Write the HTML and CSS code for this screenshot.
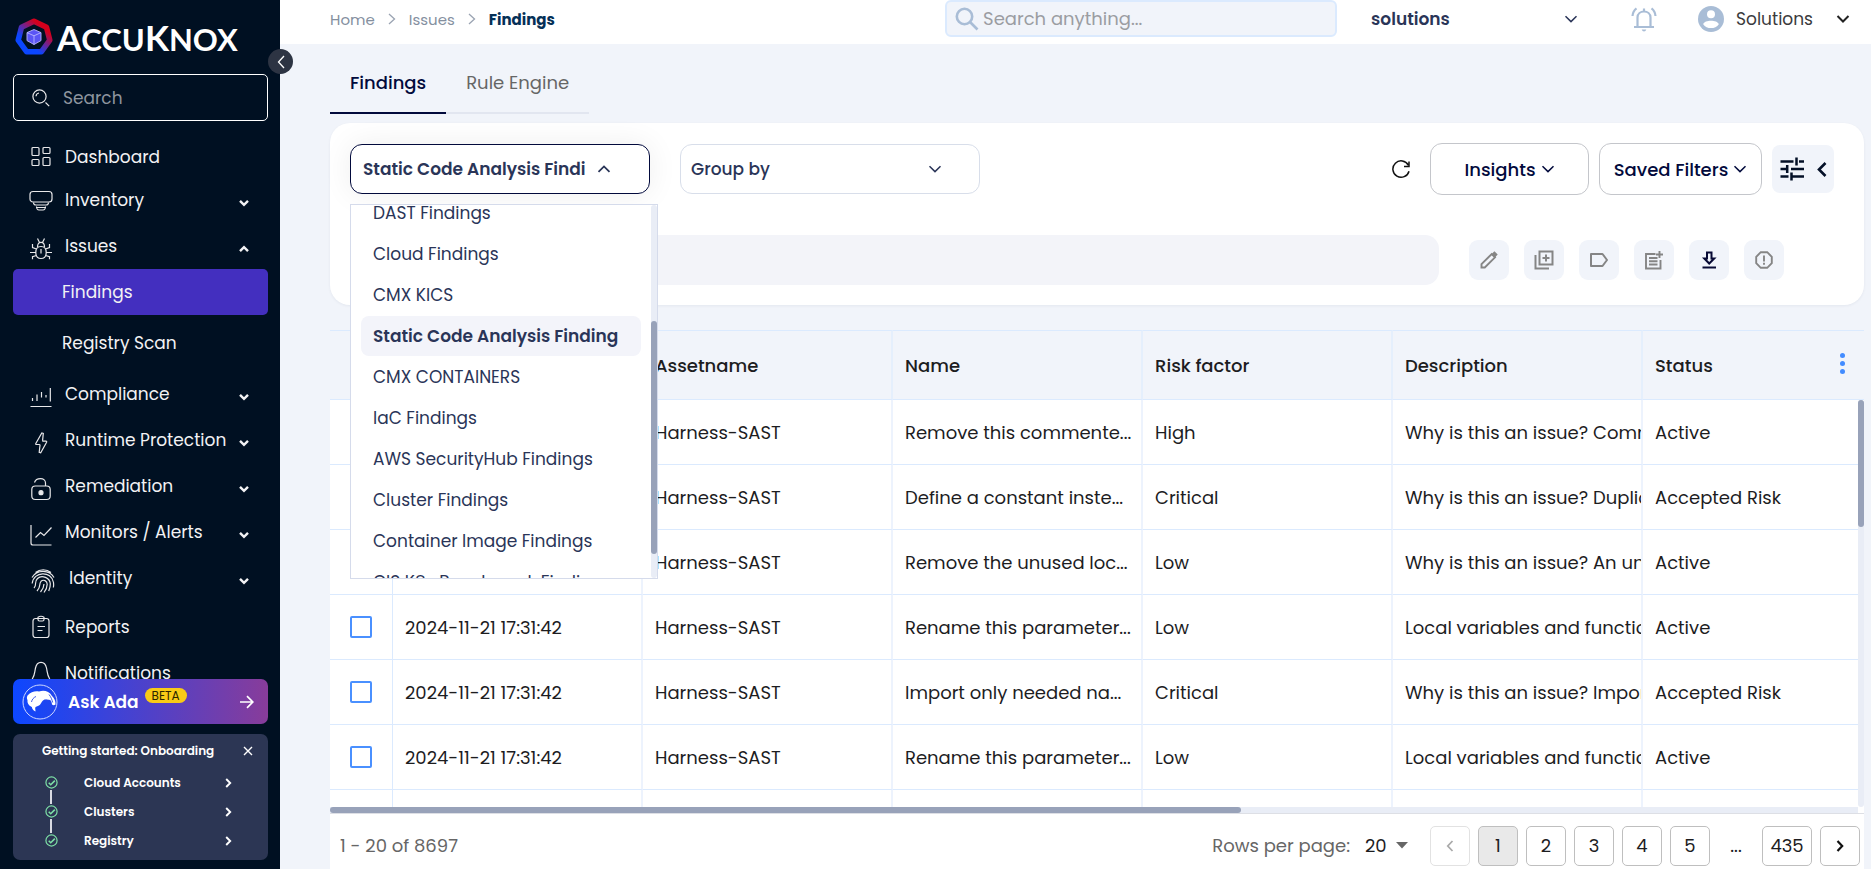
FILE: index.html
```html
<!DOCTYPE html>
<html lang="en">
<head>
<meta charset="utf-8">
<title>AccuKnox - Findings</title>
<link rel="stylesheet" href="styles.css">
</head>
<body>
<svg class="defs" aria-hidden="true">
  <symbol id="down" viewBox="0 0 14 8"><path d="M1.500 1.200 7 6.600l5.500-5.400" fill="none" stroke="currentColor" stroke-width="1.500"/></symbol>
  <symbol id="up" viewBox="0 0 14 8"><path d="M1.500 6.800 7 1.400l5.500 5.400" fill="none" stroke="currentColor" stroke-width="1.800"/></symbol>
  <symbol id="bold-down" viewBox="0 0 10 8"><path d="M1 1.800l4 4 4-4" fill="none" stroke="currentColor" stroke-width="2.400"/></symbol>
  <symbol id="bold-up" viewBox="0 0 10 8"><path d="M1 6.200l4-4 4 4" fill="none" stroke="currentColor" stroke-width="2.400"/></symbol>
  <symbol id="right" viewBox="0 0 8 12"><path d="M1 1l5.500 5L1 11" fill="none" stroke="currentColor" stroke-width="1.300"/></symbol>
  <symbol id="bold-right" viewBox="0 0 7 10"><path d="M1.200 1l4 4-4 4" fill="none" stroke="currentColor" stroke-width="1.900"/></symbol>
  <symbol id="left" viewBox="0 0 8 14"><path d="M7 1 1.500 7 7 13" fill="none" stroke="currentColor" stroke-width="1.300"/></symbol>
  <symbol id="check" viewBox="0 0 14 14"><circle cx="7" cy="7" r="6" fill="none" stroke="currentColor" stroke-width="1.300"/><path d="M4 7.200l2.200 2.200L10.600 5" fill="none" stroke="currentColor" stroke-width="1.700"/></symbol>
</svg>

<div class="app">
  <aside class="sidebar">
    <a class="logo" href="#" aria-label="AccuKnox">
      <svg class="logo-mark" viewBox="0 0 38 38">
        <defs><linearGradient id="ring" x1="0.850" y1="0.150" x2="0.250" y2="0.850"><stop offset="0.100" stop-color="#d4001c"/><stop offset="0.550" stop-color="#5b2aa8"/><stop offset="0.850" stop-color="#0b46ff"/></linearGradient></defs>
        <path d="M19 3.200 31.500 9.200 34.800 22.200 26.300 33.800H11.700L3.200 22.200 6.500 9.200Z" fill="none" stroke="url(#ring)" stroke-width="5.500" stroke-linejoin="round"/>
        <path d="M19 11.500 26 14.600v8L19 26.500l-7-3.900v-8Z" fill="#5a55f5" stroke="#b9b7ff" stroke-width="0.900"/>
        <path d="M12 14.600l7 3.200 7-3.200M19 17.800v8.700" fill="none" stroke="#b9b7ff" stroke-width="0.900"/>
      </svg>
      <span class="wordmark"><b>A</b>CCU<b>K</b>NOX</span>
    </a>
    <button class="collapse" aria-label="Collapse menu"><svg width="8" height="14"><use href="#left"/></svg></button>

    <label class="side-search">
      <svg width="18" height="18" viewBox="0 0 18 18" fill="none" stroke="#e8e8ea" stroke-width="1.200"><circle cx="7.500" cy="7.500" r="6.600"/><path d="M4 7.200A3.600 3.600 0 0 1 7 4M13.500 13.500l3.700 3.700"/></svg>
      <input type="text" placeholder="Search" aria-label="Search menu">
    </label>

    <nav class="nav">
      <a class="nav-item first" href="#"><svg class="ico" viewBox="0 0 24 24"><rect x="3" y="2.500" width="7" height="8" rx="1"/><rect x="14" y="2.500" width="7" height="6" rx="1"/><rect x="3" y="14.500" width="7" height="6" rx="1"/><rect x="14" y="12.500" width="7" height="8" rx="1"/></svg><span>Dashboard</span></a>
      <a class="nav-item" href="#"><svg class="ico" viewBox="0 0 24 24"><rect x="1" y="3.500" width="22" height="10.500" rx="3"/><path d="M4.500 14.500c0 2 1 2.500 2.500 2.500h10c1.500 0 2.500-.5 2.500-2.500M7.500 18.500c0 1.500 1 3.500 2.500 3.500h4c1.500 0 2.500-2 2.500-3.500M7 19.500h10"/></svg><span>Inventory</span><svg class="arrow"><use href="#bold-down"/></svg></a>
      <a class="nav-item sub" href="#"><svg class="ico" viewBox="0 0 24 24"><path d="M12 21.500c-3.300 0-5.200-2.200-5.200-6 0-3.600 1.800-6 5.200-6s5.200 2.400 5.200 6c0 3.800-1.900 6-5.200 6ZM12 12v4.500M8.500 10c0-3 1.200-4.700 3.500-4.700s3.500 1.700 3.500 4.700M8.500 1.500l2 4M15.500 1.500l-2 4M6.800 15.500H1M17.200 15.500H23M7.500 12l-4-1.500V7M16.500 12l4-1.500V7M7.500 18.500l-4 1.200v2.500M16.500 18.500l4 1.200v2.500"/></svg><span>Issues</span><svg class="arrow"><use href="#bold-up"/></svg></a>
      <a class="nav-child active" href="#">Findings</a>
      <a class="nav-child spaced" href="#">Registry Scan</a>
      <a class="nav-item sub" href="#"><svg class="ico" viewBox="0 0 24 24"><path d="M1.500 21.500h21M3.500 13v3M8 9.500v6.500M12.500 7v5.500M17 10v2.500M21.300 3v13.500"/></svg><span>Compliance</span><svg class="arrow"><use href="#bold-down"/></svg></a>
      <a class="nav-item sub" href="#"><svg class="ico" viewBox="0 0 24 24"><path d="M12.800 2 6.800 12.500c-.3.600 0 1 .6 1h2.800c.6 0 .8.300.8.800l-.8 7 1.500.4 5.900-10.500c.3-.6 0-1-.6-1h-2.700c-.5 0-.8-.3-.7-.8l.7-7Z"/></svg><span>Runtime Protection</span><svg class="arrow"><use href="#bold-down"/></svg></a>
      <a class="nav-item sub" href="#"><svg class="ico" viewBox="0 0 24 24"><rect x="2.800" y="9" width="18.400" height="13.500" rx="3.500"/><path d="M16.500 9V6c0-6-9.500-5.500-11-.5"/><circle cx="12" cy="15.700" r="2" fill="#e8e8ea"/></svg><span>Remediation</span><svg class="arrow"><use href="#bold-down"/></svg></a>
      <a class="nav-item sub" href="#"><svg class="ico" viewBox="0 0 24 24"><path d="M2 2v18q0 2 2 2h18.500M6.500 14.500l5-5 3.500 3 7.500-8"/></svg><span>Monitors / Alerts</span><svg class="arrow"><use href="#bold-down"/></svg></a>
      <a class="nav-item sub wide" href="#"><svg class="ico" viewBox="0 0 24 24"><path d="M4.500 3.500C9-.2 15.500-.2 20 3.500M1 8.500c5-8.300 17.500-8 22 0M1.200 14.500C2.500 2 20.500 1.500 22.500 13.500c.3 2 .2 3.500-.1 5M3 19C6.500 15 2.500 13.500 6.500 9.500c4.500-4.300 12.500-.5 12.800 5.200.1 2.800-.6 5-1.600 7.300M6 22c4.500-4.500 1.500-7 4-9.700 2.500-2.300 6.200-.4 6.200 3 0 3.300-1.500 6-3.200 8.200M9.500 23c2.300-2.700 3.500-5 3.500-8"/></svg><span>Identity</span><svg class="arrow"><use href="#bold-down"/></svg></a>
      <a class="nav-item gap" href="#"><svg class="ico" viewBox="0 0 24 24"><rect x="4" y="3.500" width="16" height="19" rx="2.500"/><path d="M9 2.300c2-1.400 4-1.400 6 0v2.200q0 1.500-1.500 1.500h-3Q9 6 9 4.500ZM8.500 11.500h7.500M8.500 15.500h5"/></svg><span>Reports</span></a>
      <a class="nav-item" href="#"><svg class="ico" viewBox="0 0 24 24"><path d="M3.500 17.500c2.500-4 2-6 3-10.500 1.500-7.500 9.500-7.500 11 0 1 4.500.5 6.500 3 10.500q.5 1-1 1h-15q-1.500 0-1-1Z"/></svg><span>Notifications</span></a>
    </nav>

    <button class="ada">
      <svg width="36" height="36" viewBox="0 0 36 36"><circle cx="18" cy="18" r="17" fill="none" stroke="#cfd8ff"/><path d="M5.500 11.500C9 7.500 13 7 17 7.500c5-1.500 10-.5 13 4.500 2.300 2 3.700 5 3.500 8.500-1.200 1-2.600.8-3.500 0-.2-2-.8-3.700-2-4.800-2.500.8-3.500-.7-5.500-.2-2.500.8-3 3.500-4.500 5.200-1.200 1.300-3 1.300-4.500 2.300-.8 1.500.2 3 0 4.500-2-.8-3.300-2.500-3.700-4.500C6.500 21.500 5 18.500 5.500 16c-.8-1.500-.8-3 0-4.500Z" fill="#fff"/><path d="M9.500 18c.5-2.500 2-4.500 4.500-5.500M27 10.500c2 2.500 3 5 3.700 8M23 16.500c1.500-.6 3-.6 4.500 0" stroke="#2b49e6" fill="none" stroke-width="0.900"/></svg>
      <span class="ada-label">Ask Ada</span><span class="beta">BETA</span>
      <svg class="ada-arrow" width="14" height="14" viewBox="0 0 14 14"><path d="M0 7h12.500M7 1.200 12.800 7 7 12.800" fill="none" stroke="#fff" stroke-width="1.700"/></svg>
    </button>

    <section class="onboard">
      <header><h2>Getting started: Onboarding</h2><button aria-label="Close"><svg width="10" height="10" viewBox="0 0 10 10"><path d="M1 1l8 8M9 1 1 9" stroke="#fff" stroke-width="1.400"/></svg></button></header>
      <ol>
        <li><svg class="tick"><use href="#check"/></svg><a href="#">Cloud Accounts</a><svg class="go"><use href="#bold-right"/></svg></li>
        <li><svg class="tick"><use href="#check"/></svg><a href="#">Clusters</a><svg class="go"><use href="#bold-right"/></svg></li>
        <li><svg class="tick"><use href="#check"/></svg><a href="#">Registry</a><svg class="go"><use href="#bold-right"/></svg></li>
      </ol>
    </section>
  </aside>

  <div class="page">
    <header class="topbar">
      <nav class="crumbs" aria-label="Breadcrumb">
        <a href="#">Home</a><svg><use href="#right"/></svg><a href="#">Issues</a><svg><use href="#right"/></svg><strong>Findings</strong>
      </nav>
      <label class="search">
        <svg width="24" height="24" viewBox="0 0 24 24" fill="none" stroke="#a9bdd6" stroke-width="2.600"><circle cx="9.500" cy="9.500" r="7.700"/><path d="M15 15l7.500 7.500"/></svg>
        <input type="text" placeholder="Search anything..." aria-label="Search anything">
      </label>
      <div class="tenant"><select aria-label="Tenant"><option>solutions</option></select><svg class="chev"><use href="#down"/></svg></div>
      <button class="bell" aria-label="Notifications"><svg width="26" height="26" viewBox="0 0 26 26" fill="none" stroke="#a9bdd6" stroke-width="2.200"><path d="M3 21h20M6.500 21v-9.500c0-8 13-8 13 0V21M13 2.500v2.500M1.500 10c.2-3.200 1.500-5.800 4-7.700M24.500 10c-.2-3.200-1.500-5.800-4-7.700"/><path d="M10.700 23.500h4.600q-.6 2-2.300 2t-2.300-2Z" fill="#a9bdd6" stroke="none"/></svg></button>
      <button class="user"><svg width="26" height="26" viewBox="0 0 26 26"><circle cx="13" cy="13" r="13" fill="#a9bdd6"/><circle cx="13" cy="8.200" r="4" fill="#fff"/><path d="M5.200 18.200c1.500-4.500 14-4.500 15.600 0-3.400 5.200-12.200 5.200-15.600 0Z" fill="#fff"/></svg><span>Solutions</span><svg class="chev" viewBox="0 0 14 8"><path d="M1.500 1 7 6.500 12.500 1" fill="none" stroke="#222" stroke-width="2"/></svg></button>
    </header>

    <main class="content">
      <div class="tabs" role="tablist"><button class="tab on" role="tab" aria-selected="true">Findings</button><button class="tab" role="tab">Rule Engine</button></div>

      <section class="filters">
        <div class="row">
          <div class="picker">
            <button class="picker-btn" aria-haspopup="listbox" aria-expanded="true"><span>Static Code Analysis Finding</span><svg class="chev"><use href="#up"/></svg></button>
            <div class="popup">
              <ul role="listbox" aria-label="Finding type">
                <li role="option">DAST Findings</li><li role="option">Cloud Findings</li><li role="option">CMX KICS</li><li role="option" class="sel" aria-selected="true">Static Code Analysis Finding</li><li role="option">CMX CONTAINERS</li><li role="option">IaC Findings</li><li role="option">AWS SecurityHub Findings</li><li role="option">Cluster Findings</li><li role="option">Container Image Findings</li><li role="option">CIS K8s Benchmark Findings</li>
              </ul>
              <div class="popup-track"><div class="popup-thumb"></div></div>
            </div>
          </div>
          <div class="group"><select aria-label="Group by"><option>Group by</option></select><svg class="chev"><use href="#down"/></svg></div>
          <button class="refresh" aria-label="Refresh"><svg width="20" height="20" viewBox="0 0 20 20" fill="none" stroke="#111" stroke-width="1.500"><path d="M18 12.200A8.200 8.200 0 1 1 17.300 6.200M18 2.500v5h-5"/></svg></button>
          <button class="outline insights">Insights <svg class="chev"><use href="#down"/></svg></button>
          <button class="outline saved">Saved Filters <svg class="chev"><use href="#down"/></svg></button>
          <button class="tune" aria-label="Filter settings"><svg width="24" height="24" viewBox="0 0 24 24" fill="none" stroke="#041027" stroke-width="2.500"><path d="M0.500 4.500h13M19 4.500h5M16.500 0.500v8M0.500 12H6M11 12h13M7.200 8v8M0.500 19.500h8M12 19.500h12M11.500 15.500v8"/></svg><svg width="10" height="15" viewBox="0 0 10 15"><path d="M8.500 1 2 7.500 8.500 14" fill="none" stroke="#041027" stroke-width="2.600"/></svg></button>
        </div>
        <div class="row second">
          <input class="query" type="text" aria-label="Filter findings">
          <div class="tools">
            <button aria-label="Edit"><svg viewBox="0 0 20 20"><path d="M2.500 17.500v-3.300L12.700 4l3.300 3.300L5.800 17.500Z" stroke-width="1.900"/><path d="M14 2.700l3.300 3.300" stroke-width="4"/></svg></button>
            <button aria-label="Duplicate"><svg viewBox="0 0 20 20"><path d="M5.500 1.500h13v13h-13ZM12 4.500v7M8.500 8h7M1.500 5v13.500H15" stroke-width="2"/></svg></button>
            <button aria-label="Label"><svg viewBox="0 0 20 20"><path d="M2 4h11.500l4.500 6-4.500 6H2Z" stroke-width="2" stroke-linejoin="round"/></svg></button>
            <button aria-label="Create ticket"><svg viewBox="0 0 20 20"><path d="M11.500 4H2v14.500h14.500V10M5 8h8.500M5 11.300h8.500M5 14.500h8.500M15.500 1v7M12 4.500h7" stroke-width="1.900"/></svg></button>
            <button aria-label="Download" class="dark"><svg viewBox="0 0 20 20"><path d="M8 2.500h4.500v6h2.700L10.200 13.500 5.300 8.500H8ZM3.500 17.500h13.500" stroke-width="2"/></svg></button>
            <button aria-label="Report"><svg viewBox="0 0 20 20"><path d="M6.800 2.200h6.400l4.600 4.600v6.400l-4.600 4.600H6.800l-4.600-4.600V6.800ZM10 5.500v6M10 12.800v2" stroke-width="1.900"/></svg></button>
          </div>
        </div>
      </section>

      <div class="grid">
        <table>
          <colgroup><col class="c-check"><col class="c-data"><col class="c-data"><col class="c-data"><col class="c-data"><col class="c-data"><col></colgroup>
          <thead><tr><th><input type="checkbox" aria-label="Select all"></th><th>Last Seen</th><th>Assetname</th><th>Name</th><th>Risk factor</th><th>Description</th><th><div class="status-head">Status<button aria-label="Columns"><i></i><i></i><i></i></button></div></th></tr></thead>
          <tbody>
            <tr><td><input type="checkbox" aria-label="Select row"></td><td>2024-11-21 17:31:42</td><td>Harness-SAST</td><td>Remove this commente...</td><td>High</td><td>Why is this an issue? Comm</td><td>Active</td></tr>
            <tr><td><input type="checkbox" aria-label="Select row"></td><td>2024-11-21 17:31:42</td><td>Harness-SAST</td><td>Define a constant inste...</td><td>Critical</td><td>Why is this an issue? Duplic</td><td>Accepted Risk</td></tr>
            <tr><td><input type="checkbox" aria-label="Select row"></td><td>2024-11-21 17:31:42</td><td>Harness-SAST</td><td>Remove the unused loc...</td><td>Low</td><td>Why is this an issue? An un</td><td>Active</td></tr>
            <tr><td><input type="checkbox" aria-label="Select row"></td><td>2024-11-21 17:31:42</td><td>Harness-SAST</td><td>Rename this parameter...</td><td>Low</td><td>Local variables and functio</td><td>Active</td></tr>
            <tr><td><input type="checkbox" aria-label="Select row"></td><td>2024-11-21 17:31:42</td><td>Harness-SAST</td><td>Import only needed na...</td><td>Critical</td><td>Why is this an issue? Impor</td><td>Accepted Risk</td></tr>
            <tr><td><input type="checkbox" aria-label="Select row"></td><td>2024-11-21 17:31:42</td><td>Harness-SAST</td><td>Rename this parameter...</td><td>Low</td><td>Local variables and functio</td><td>Active</td></tr>
            <tr><td></td><td></td><td></td><td></td><td></td><td></td><td></td></tr>
          </tbody>
        </table>
        <div class="v-track"><div class="v-thumb"></div></div>
      </div>
      <div class="h-track"><div class="h-thumb"></div></div>

      <footer class="pager">
        <span class="count">1 - 20 of 8697</span>
        <label class="per" for="per">Rows per page:</label>
        <div class="per-select"><select id="per"><option>20</option></select><svg width="12" height="7" viewBox="0 0 12 7"><path d="M0 0h12L6 6.500Z" fill="#666"/></svg></div>
        <div class="pages">
          <button disabled aria-label="Previous page"><svg width="8" height="12" viewBox="0 0 8 12"><path d="M6.500 1 1.800 6l4.700 5" fill="none" stroke="#aaa" stroke-width="1.800"/></svg></button>
          <button class="current">1</button><button>2</button><button>3</button><button>4</button><button>5</button><span>...</span><button class="last">435</button>
          <button aria-label="Next page"><svg width="8" height="12" viewBox="0 0 8 12"><path d="M1.500 1l4.700 5-4.700 5" fill="none" stroke="#111" stroke-width="2.200"/></svg></button>
        </div>
      </footer>
    </main>
  </div>
</div>
</body>
</html>
```
FILE: styles.css
```css
* { box-sizing: border-box; }
body { margin: 0; font-family: Poppins, Inter, "Open Sans", sans-serif; font-size: 17px; color: #1d1d1f; }
button, input, select { font: inherit; color: inherit; margin: 0; }
button { border: 0; padding: 0; background: none; cursor: pointer; }
select { appearance: none; border: 0; background: none; width: 100%; outline: 0; padding: 0; }
a { color: inherit; text-decoration: none; }
svg { display: block; flex: none; }
.defs { position: absolute; width: 0; height: 0; }
.chev { width: 14px; height: 8px; }

.app { display: flex; height: 100vh; overflow: hidden; background: #f1f4fa; }

/* sidebar */
.sidebar { position: relative; flex: none; width: 280px; display: flex; flex-direction: column; padding: 0 12px 9px 13px; background: #001022; color: #f2f2f4; }
.logo { display: flex; align-items: center; gap: 4px; height: 74px; padding-left: 2px; }
.logo-mark { width: 38px; height: 38px; }
.wordmark { padding-top: 2px; font-family: Lato, sans-serif; font-weight: 700; font-size: 31px; line-height: 40px; color: #fff; }
.wordmark b { font-size: 35px; font-weight: 700; }
.collapse { position: absolute; z-index: 5; top: 49px; right: -13px; width: 25px; height: 25px; border-radius: 50%; background: #2d3443; color: #fff; display: grid; place-items: center; }
.side-search { display: flex; align-items: center; gap: 11px; height: 47px; padding: 0 18px; border: 1px solid #fff; border-radius: 5px; }
.side-search input { flex: 1; min-width: 0; border: 0; outline: 0; background: none; }
.side-search input::placeholder { color: #8e959f; opacity: 1; }
.nav { flex: 1; min-height: 0; overflow: hidden; padding-top: 12px; }
.nav-item { display: flex; align-items: center; height: 46px; padding: 0 19px 0 16px; gap: 12px; white-space: nowrap; }
.nav-item.first { height: 44px; padding-top: 3px; }
.nav-item.gap { margin-top: 3px; }
.nav-item.wide { gap: 14px; padding-left: 18px; }
.nav-item span { flex: 1; }
.ico { width: 24px; height: 24px; fill: none; stroke: #e8e8ea; stroke-width: 1.2; }
.arrow { width: 10px; height: 8px; margin-top: 5px; }
.sub .ico { margin-top: 6px; }
.nav-child { display: flex; align-items: center; height: 46px; padding-left: 49px; border-radius: 5px; }
.nav-child.active { background: #432fbf; }
.nav-child.spaced { margin: 5px 0; }
.ada { display: flex; align-items: center; flex: none; height: 45px; padding: 0 14px 0 9px; border-radius: 7px; background: linear-gradient(90deg, #0d47ff, #883c9a); color: #fff; }
.ada-label { margin-left: 10px; font-size: 17px; font-weight: 600; }
.beta { align-self: flex-start; margin: 9px auto 0 6px; width: 42px; border-radius: 8px; background: #f9cb16; color: #2c2600; font-size: 12px; line-height: 15px; }
.onboard { flex: none; margin-top: 10px; height: 126px; border-radius: 7px; background: #2c3654; color: #fff; font-size: 12px; font-weight: 600; }
.onboard header { display: flex; align-items: center; justify-content: space-between; height: 34px; padding: 0 15px 0 29px; }
.onboard h2 { margin: 0; font-size: 12px; font-weight: 600; }
.onboard ol { list-style: none; margin: 0; padding: 0 36px 0 32px; }
.onboard li { position: relative; display: flex; align-items: center; height: 29px; }
.onboard li a { flex: 1; margin-left: 26px; }
.onboard li + li::before { content: ""; position: absolute; left: 5px; top: -7px; width: 2px; height: 14px; background: #d8dae2; }
.tick { width: 13px; height: 13px; color: #7de0a6; }
.go { width: 7px; height: 10px; }

/* top bar */
.page { flex: 1; min-width: 0; display: flex; flex-direction: column; }
.topbar { flex: none; display: flex; align-items: flex-start; height: 44px; padding: 0 21px 0 50px; background: #fff; }
.topbar > * { height: 38px; }
.crumbs { flex: 1; display: flex; align-items: center; gap: 13px; font-size: 15px; color: #85909f; }
.crumbs svg { width: 8px; height: 12px; color: #9aa3b2; }
.crumbs strong { color: #053057; font-weight: 700; }
.search { width: 392px; height: 37px; display: flex; align-items: center; gap: 2px; padding: 0 8px; border: 2px solid #dbeafe; border-radius: 6px; background: #f1f4fa; font-size: 18px; }
.search input { flex: 1; min-width: 0; border: 0; outline: 0; background: none; }
.search input::placeholder { color: #9b9da2; opacity: 1; }
.tenant { display: flex; align-items: center; width: 207px; margin-left: 34px; font-weight: 600; color: #2a3558; }
.bell { margin-left: 53px; }
.user { display: flex; align-items: center; margin-left: 41px; color: #3b3b3d; }
.user span { margin: 0 23px 0 12px; }

/* content */
.content { flex: 1; min-height: 0; display: flex; flex-direction: column; padding: 0 7px 0 50px; }
.tabs { display: flex; flex: none; height: 70px; font-size: 18px; }
.tab { padding: 8px 20px 0; border-bottom: 2px solid #e2e6f0; color: #666; }
.tab.on { border-color: #020a3c; color: #020a3c; font-weight: 500; }
.filters { flex: none; margin-top: 9px; padding: 20px 30px 20px 20px; border-radius: 20px; background: #fff; box-shadow: 0 1px 3px rgba(20, 30, 60, .06); }
.row { display: flex; align-items: center; height: 52px; }
.row.second { height: 50px; margin-top: 40px; }
.picker { position: relative; z-index: 3; width: 300px; border-radius: 12px; box-shadow: 0 0 30px rgba(0, 0, 0, .07); }
.picker-btn { display: flex; align-items: center; gap: 12px; width: 100%; height: 50px; padding: 0 12px; border: 1px solid #020a3c; border-radius: 12px; background: #fff; color: #2a3558; font-weight: 600; text-align: left; }
.picker-btn span { width: 222px; overflow: hidden; white-space: nowrap; }
.popup { position: absolute; top: 60px; left: 0; width: 308px; height: 375px; overflow: hidden; display: flex; justify-content: space-between; align-items: flex-end; border: 1px solid #d5dbeb; background: #fff; }
.popup ul { align-self: flex-start; list-style: none; margin: -12px 0 0; padding: 0 0 0 10px; color: #2a3558; }
.popup li { width: 280px; height: 40px; margin-bottom: 1px; padding-left: 12px; border-radius: 8px; line-height: 40px; white-space: nowrap; }
.popup li.sel { background: #f3f4fa; font-weight: 600; }
.popup-track { width: 6px; height: 100%; padding-top: 116px; border-radius: 3px; background: #e9edf6; }
.popup-thumb { height: 233px; border-radius: 3px; background: #98a2b9; }
.group { display: flex; align-items: center; width: 300px; height: 50px; margin: 0 auto 0 30px; padding: 0 37px 0 10px; border: 1px solid #d8deea; border-radius: 12px; color: #2a3558; font-weight: 500; }
.refresh { margin-right: 19px; }
.outline { display: flex; align-items: center; justify-content: center; gap: 5px; height: 52px; margin-right: 10px; border: 1px solid #c4c6cb; border-radius: 12px; color: #020a3c; font-size: 18px; font-weight: 500; }
.insights { width: 159px; }
.saved { width: 163px; }
.tune { display: flex; align-items: center; justify-content: space-between; width: 62px; height: 48px; padding: 0 7px 0 8px; border-radius: 8px; background: #f1f4fa; }
.query { flex: 1; min-width: 0; height: 50px; border: 0; border-radius: 14px; background: #f3f4f9; padding: 0 16px; }
.tools { display: flex; gap: 15px; margin: 0 50px 0 30px; }
.tools button { display: grid; place-items: center; width: 40px; height: 40px; border-radius: 9px; background: #f1f4fa; }
.tools svg { width: 20px; height: 20px; fill: none; stroke: #858585; }
.tools .dark svg { stroke: #080a35; }

/* table */
.grid { position: relative; flex: 1; min-height: 0; margin-top: 25px; overflow: hidden; background: #fff; font-size: 18px; }
table { width: 100%; table-layout: fixed; border-collapse: separate; border-spacing: 0; }
.c-check { width: 63px; }
.c-data { width: 250px; }
th, td { height: 65px; padding: 0 0 0 12px; border-bottom: 1px solid #dbeafe; border-right: 2px solid #edf3fd; text-align: left; font-weight: 400; white-space: nowrap; overflow: hidden; }
th { height: 70px; border-top: 1px solid #dbeafe; border-right-color: #e5effc; background: #f1f4fa; font-weight: 500; }
th:first-child, td:first-child { padding: 0 0 0 20px; border-right: 1px solid #dbeafe; }
th:last-child, td:last-child { border-right: 0; }
td input, th input { appearance: none; display: block; width: 22px; height: 22px; border: 2px solid #4a90ff; border-radius: 2px; background: #fff; }
.status-head { display: flex; align-items: center; justify-content: space-between; padding-right: 19px; }
.status-head button { display: grid; gap: 3px; margin-bottom: 4px; }
.status-head i { width: 5px; height: 5px; border-radius: 50%; background: #438cff; }
.v-track { position: absolute; top: 70px; right: 0; bottom: 0; width: 6px; border-radius: 3px; background: #e9edf6; }
.v-thumb { height: 127px; border-radius: 3px; background: #98a2b9; }
.h-track { flex: none; height: 7px; padding-right: 6px; border-bottom: 1px solid #dddfe5; background: linear-gradient(#e9edf6, #e9edf6) 0 0 / calc(100% - 6px) 100% no-repeat #fff; }
.h-thumb { width: 59.6%; height: 6px; border-radius: 3px; background: #98a2b9; }

.pager { flex: none; display: flex; align-items: center; height: 55px; padding: 8px 4px 0 10px; background: #fff; font-size: 18px; }
.pager > * { flex: none; }
.count, .per { color: #666; }
.count { margin-right: auto; }
.per-select { display: flex; align-items: center; width: 43px; margin: 0 22px 0 15px; }
.pages { display: flex; gap: 8px; align-items: center; }
.pages button { display: grid; place-items: center; width: 40px; height: 40px; border: 1px solid #bfbfbf; border-radius: 5px; background: #fff; }
.pages .last { width: 50px; }
.pages .current { background: #e9e9e9; }
.pages button:disabled { border-color: #e2e2e2; }
.pages span { width: 36px; text-align: center; }
```
